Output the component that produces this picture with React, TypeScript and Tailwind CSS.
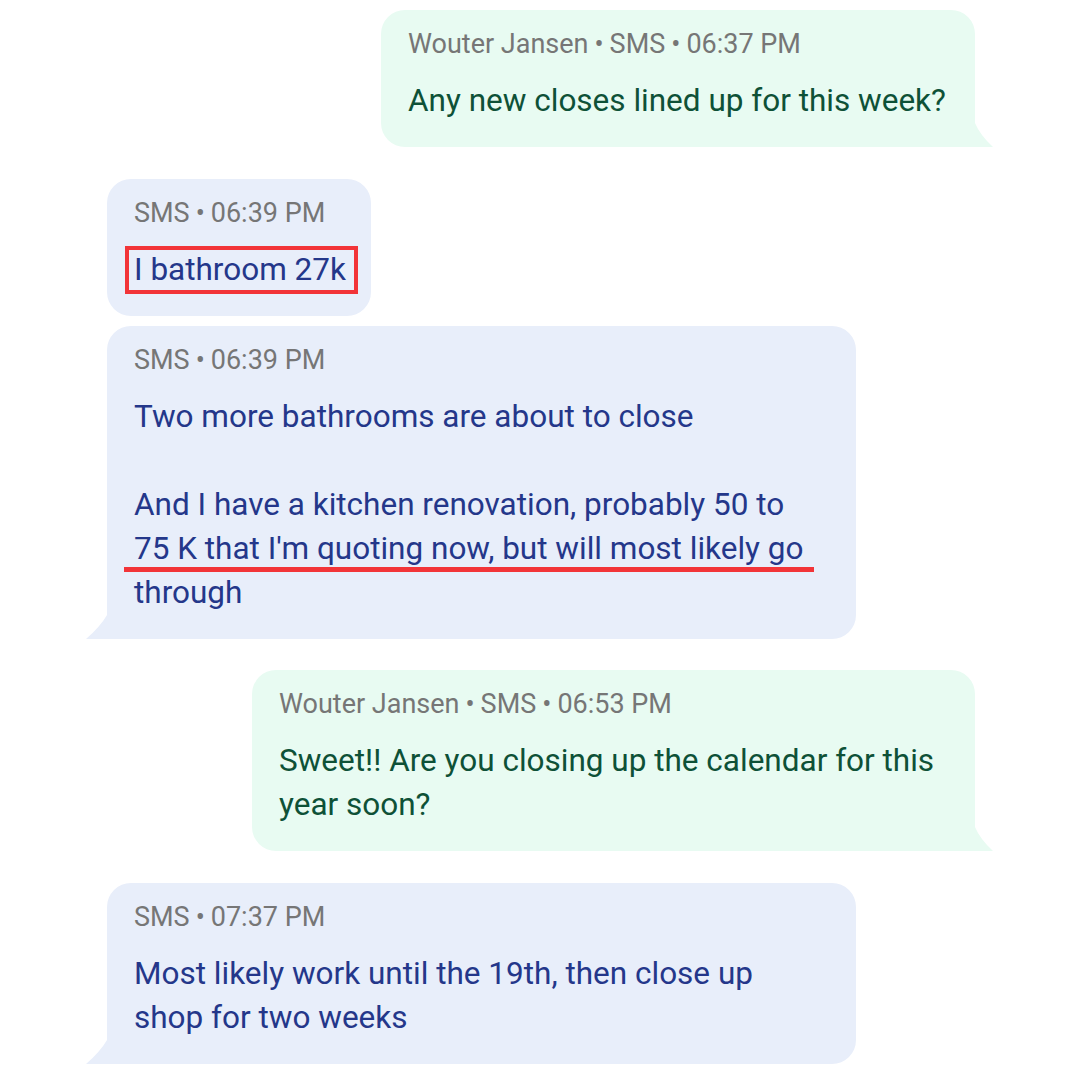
import React from "react";

const FONT = { fontFamily: "Roboto, 'Noto Sans', sans-serif" };

function Meta({ parts }: { parts: string[] }) {
  return (
    <div className="text-[27px] leading-[32px] text-[#767676] whitespace-nowrap">
      {parts.map((p, i) => (
        <React.Fragment key={i}>
          {i > 0 && <span className="mx-[6px]">•</span>}
          {p}
        </React.Fragment>
      ))}
    </div>
  );
}

function Outgoing({ width, meta, children }: { width: string; meta: string[]; children: React.ReactNode }) {
  return (
    <div className="flex justify-end pr-[105px]">
      <div className={`relative ${width} rounded-[24px] rounded-br-none bg-[#e8fbf2] pt-[18px] pb-[24px] pl-[27px] pr-[20px]`}>
        <Meta parts={meta} />
        <div className="mt-[19px] text-[31.5px] leading-[44px] text-[#0e5137]">{children}</div>
        <svg className="absolute bottom-0 -right-[18px]" width="19" height="26" viewBox="0 0 19 26">
          <path d="M0 0 L0 26 L19 26 Q6 14 1 2 Z" fill="#e8fbf2" />
        </svg>
      </div>
    </div>
  );
}

function Incoming({ width, meta, tail = true, children }: { width: string; meta: string[]; tail?: boolean; children: React.ReactNode }) {
  return (
    <div className="flex justify-start pl-[107px]">
      <div className={`relative ${width} rounded-[24px] ${tail ? "rounded-bl-none" : ""} bg-[#e8eefa] pt-[18px] pb-[24px] pl-[27px] pr-[20px]`}>
        <Meta parts={meta} />
        <div className="mt-[19px] text-[31.5px] leading-[44px] text-[#24378a]">{children}</div>
        {tail && (
          <svg className="absolute bottom-0 -left-[21px]" width="22" height="26" viewBox="0 0 22 26">
            <path d="M22 0 L22 26 L0 26 Q14 14 21 2 Z" fill="#e8eefa" />
          </svg>
        )}
      </div>
    </div>
  );
}

export default function App() {
  return (
    <div className="w-[1080px] h-[1080px] bg-white overflow-hidden pt-[10px] flex flex-col" style={FONT}>
      <Outgoing width="w-[594px]" meta={["Wouter Jansen", "SMS", "06:37 PM"]}>
        Any new closes lined up for this week?
      </Outgoing>

      <div className="h-[32px]" />
      <Incoming width="w-[264px]" meta={["SMS", "06:39 PM"]} tail={false}>
        <span className="relative inline-block whitespace-nowrap">
          I bathroom 27k
          <span className="absolute -left-[9px] -right-[12px] -top-[2px] -bottom-[2px] border-[4px] border-[#f23438]" />
        </span>
      </Incoming>

      <div className="h-[10px]" />
      <Incoming width="w-[749px]" meta={["SMS", "06:39 PM"]}>
        <div>Two more bathrooms are about to close</div>
        <div className="h-[44px]" />
        <div>And I have a kitchen renovation, probably 50 to</div>
        <div>
          <span className="relative inline-block whitespace-nowrap">
            75 K that I'm quoting now, but will most likely go
            <span className="absolute -left-[10px] -right-[11px] bottom-[-1px] h-[5px] bg-[#f23438]" />
          </span>
        </div>
        <div>through</div>
      </Incoming>

      <div className="h-[31px]" />
      <Outgoing width="w-[723px]" meta={["Wouter Jansen", "SMS", "06:53 PM"]}>
        <div>Sweet!! Are you closing up the calendar for this</div>
        <div>year soon?</div>
      </Outgoing>

      <div className="h-[32px]" />
      <Incoming width="w-[749px]" meta={["SMS", "07:37 PM"]}>
        <div>Most likely work until the 19th, then close up</div>
        <div>shop for two weeks</div>
      </Incoming>
    </div>
  );
}
